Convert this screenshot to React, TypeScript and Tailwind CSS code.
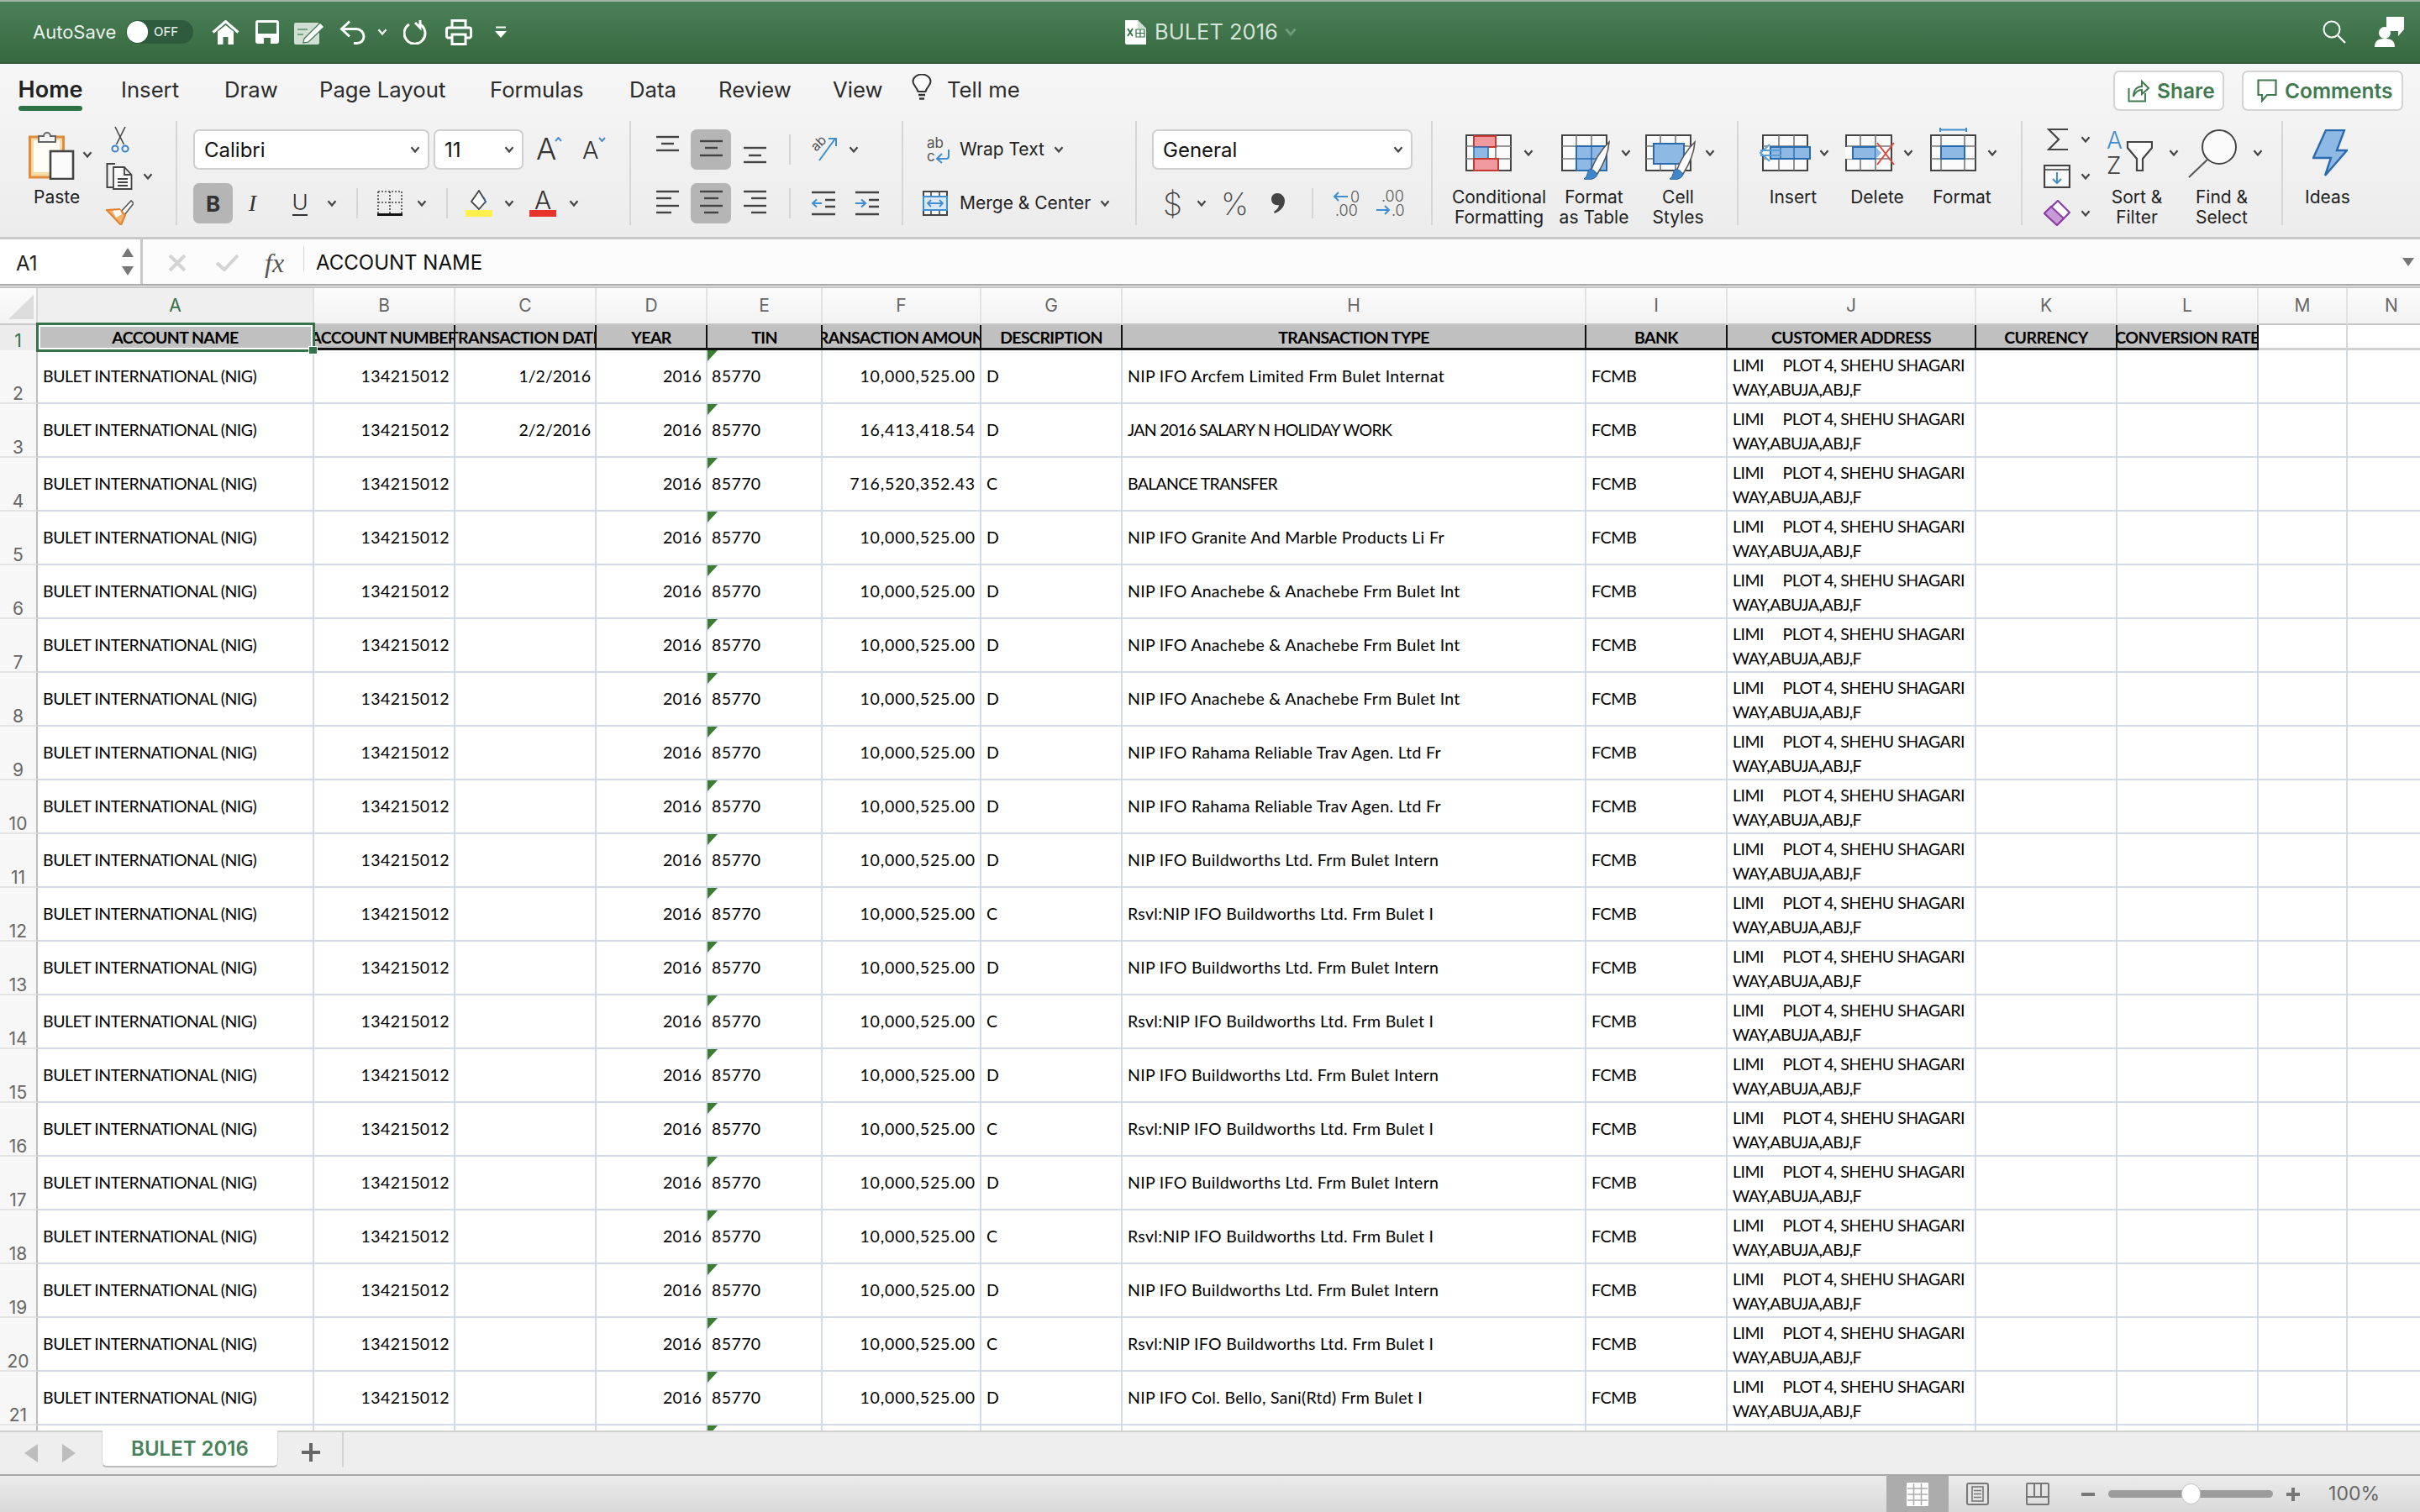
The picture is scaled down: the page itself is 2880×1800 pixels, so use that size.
import React from "react";

const ui = "font-[Inter,sans-serif]";
const cell = "font-[Lato,sans-serif]";

const Chev = ({ className = "", color = "#444" }: { className?: string; color?: string }) => (
  <svg viewBox="0 0 12 8" className={"w-[12px] h-[8px] shrink-0 " + className}>
    <path d="M1.5 1.2 L6 6.5 L10.5 1.2" fill="none" stroke={color} strokeWidth="2.2" />
  </svg>
);

const Sep = () => <div className="w-[2px] h-[124px] bg-[#d6d6d6] shrink-0" />;
const MiniSep = ({ className = "" }: { className?: string }) => <div className={"w-[2px] h-[36px] bg-[#d6d6d6] shrink-0 " + className} />;

function Lines({ ys, widths, w = 27, h = 48, stroke = "#444" }: { ys: number[]; widths: [number, number][]; w?: number; h?: number; stroke?: string }) {
  return (
    <svg viewBox={`0 0 ${w} ${h}`} className="shrink-0" width={w} height={h}>
      {ys.map((y, i) => (
        <path key={i} d={`M${widths[i][0]} ${y} H${widths[i][1]}`} stroke={stroke} strokeWidth="2.4" />
      ))}
    </svg>
  );
}

function Select({ text, className }: { text: string; className: string }) {
  return (
    <div className={"h-[48px] bg-white border-2 border-[#cfcfcf] rounded-[7px] flex items-center justify-between pl-[11px] pr-[9px] shrink-0 " + className}>
      <span className="text-[24px] text-[#111] leading-none pt-[2px]">{text}</span>
      <Chev />
    </div>
  );
}

function Grid({ w = 55, h = 44, v = [18, 36], hz = [14, 29] }: { w?: number; h?: number; v?: number[]; hz?: number[] }) {
  return (
    <>
      <rect x="1" y="1" width={w - 2} height={h - 2} fill="#fafafa" stroke="#444" strokeWidth="2" />
      {v.map((x) => (
        <path key={"v" + x} d={`M${x} 1 V${h - 1}`} stroke="#777" strokeWidth="1.6" />
      ))}
      {hz.map((y) => (
        <path key={"h" + y} d={`M1 ${y} H${w - 1}`} stroke="#777" strokeWidth="1.6" />
      ))}
    </>
  );
}

const Brush = ({ x = 0 }: { x?: number }) => (
  <g transform={`translate(${x} 0)`}>
    <path d="M35 44 C40 30 48 18 57 9 C56 24 50 36 43 47 Z" fill="#fff" stroke="#555" strokeWidth="1.6" />
    <path d="M34 41 C39 42 42 45 43 48 C41 53 34 55 27 53 C32 50 30 45 34 41 Z" fill="#3f86c8" stroke="#2c6aa6" strokeWidth="1" />
  </g>
);

function BigLabel({ children, className = "" }: { children: React.ReactNode; className?: string }) {
  return <div className={"text-[21px] leading-[24px] text-[#222] text-center " + className}>{children}</div>;
}

function TitleBar() {
  return (
    <div className="h-[76px] flex items-center bg-gradient-to-b from-[#4b8159] to-[#37683f] border-t-2 border-t-[#a3b5a8] border-b-2 border-b-[#305a37] relative text-white">
      <span className="ml-[39px] w-[111px] text-[22px] text-[#eaf1ec]">AutoSave</span>
      <div className="w-[80px] h-[28px] rounded-full bg-[#2e5a3d] flex items-center shrink-0">
        <div className="w-[25px] h-[26px] rounded-full bg-white ml-[1px]" />
        <span className="ml-[7px] text-[15px] font-medium text-[#dfe9e1]">OFF</span>
      </div>
      <svg viewBox="0 0 33 29" className="w-[33px] h-[29px] ml-[22px]">
        <path d="M1.5 14.5 L16.5 1.5 L31.5 14.5" fill="none" stroke="#fff" strokeWidth="3" />
        <path d="M7 13.5 L16.5 6 L26 13.5 V29 H19.5 V20 H13.5 V29 H7 Z" fill="#fff" />
      </svg>
      <svg viewBox="0 0 28 28" className="w-[28px] h-[28px] ml-[19px]">
        <path d="M3 0 H25 a3 3 0 0 1 3 3 V25 a3 3 0 0 1 -3 3 H3 a3 3 0 0 1 -3 -3 V3 a3 3 0 0 1 3 -3 Z M3 3 V16 H25 V3 Z M10 21 V28 H18 V21 Z" fill="#fff" fillRule="evenodd" />
      </svg>
      <svg viewBox="0 0 36 29" className="w-[36px] h-[29px] ml-[18px]">
        <rect x="0" y="3" width="30" height="26" rx="2" fill="#cfe0d3" />
        <path d="M12 22 L31 3 L36 8 L17 26 L11 27 Z" fill="#fff" stroke="#3e7049" strokeWidth="1.2" />
        <path d="M4 11 H16 M4 17 H11" stroke="#7aa084" strokeWidth="2" />
      </svg>
      <svg viewBox="0 0 31 29" className="w-[31px] h-[29px] ml-[18px]">
        <path d="M12 1.5 L2.5 10.5 L12 19.5 M3 10.5 H20 A9 9 0 0 1 29 19.5 A8 8 0 0 1 21 27.5 H17" fill="none" stroke="#fff" strokeWidth="3" />
      </svg>
      <Chev className="ml-[14px] w-[10px]" color="#fff" />
      <svg viewBox="0 0 30 30" className="w-[30px] h-[30px] ml-[19px]">
        <path d="M20 1 V10 L14 4 M20 6 A12.5 12.5 0 1 1 7 6" fill="none" stroke="#fff" strokeWidth="3" />
      </svg>
      <svg viewBox="0 0 32 31" className="w-[32px] h-[31px] ml-[20px]">
        <path d="M8 10 V1.5 H24 V10 M8 22 H3 A2 2 0 0 1 1.5 20 V12 A2 2 0 0 1 3 10 H29 A2 2 0 0 1 30.5 12 V20 A2 2 0 0 1 29 22 H24 M8 18 H24 V29.5 H8 Z" fill="none" stroke="#fff" strokeWidth="3" />
      </svg>
      <svg viewBox="0 0 14 14" className="w-[14px] h-[14px] ml-[27px]">
        <path d="M1 1.5 H13" stroke="#fff" strokeWidth="2" />
        <path d="M0 6 H14 L7 14 Z" fill="#fff" />
      </svg>
      <div className="flex items-center ml-[736px]">
        <svg viewBox="0 0 25 29" className="w-[25px] h-[29px]">
          <path d="M0 0 H15 L25 10 V29 H2 A2 2 0 0 1 0 27 Z" fill="#fff" />
          <path d="M15 0 V10 H25" fill="#cfe0d3" />
          <path d="M3 10 L9 19 M9 10 L3 19" stroke="#2f7045" strokeWidth="1.8" />
          <path d="M13 11 H23 V20 H13 Z M13 15.5 H23 M18 11 V20" fill="none" stroke="#2f7045" strokeWidth="1.2" />
        </svg>
        <span className="ml-[10px] text-[25.5px] text-[#d6e3d9] leading-none">BULET 2016</span>
        <Chev className="ml-[7px] w-[16px] h-[10px]" color="#6f9a7b" />
      </div>
      <div className="ml-auto flex items-center mr-[19px]">
        <svg viewBox="0 0 28 28" className="w-[28px] h-[28px]">
          <circle cx="11" cy="11" r="9.5" fill="none" stroke="#fff" strokeWidth="2" />
          <path d="M18 18 L27 27" stroke="#fff" strokeWidth="2.2" />
        </svg>
        <svg viewBox="0 0 35 36" className="w-[35px] h-[36px] ml-[34px]">
          <path d="M14 0 H35 V15 L28 23 V17 H14 Z" fill="#fff" />
          <circle cx="12" cy="19" r="7" fill="#fff" />
          <path d="M0 36 C0 28 5 26 12 26 C19 26 24 28 24 36 Z" fill="#fff" />
        </svg>
      </div>
    </div>
  );
}

function TabsRow() {
  const t = "mt-[15px] leading-[32px] whitespace-nowrap shrink-0 ";
  return (
    <div className="h-[68px] flex text-[25.7px] text-[#2b2b2b]">
      <div className="ml-[22px] w-[76px] h-[56px] flex flex-col items-center">
        <span className="mt-[15px] text-[27px] font-semibold leading-[32px] text-[#222]">Home</span>
        <div className="mt-[3px] w-[76px] h-[6px] rounded-full bg-[#2f7045]" />
      </div>
      <span className={t + "ml-[46px] w-[72px]"}>Insert</span>
      <span className={t + "ml-[51px] w-[62px]"}>Draw</span>
      <span className={t + "ml-[51px] w-[150px]"}>Page Layout</span>
      <span className={t + "ml-[53px] w-[114px]"}>Formulas</span>
      <span className={t + "ml-[52px] w-[56px]"}>Data</span>
      <span className={t + "ml-[50px] w-[86px]"}>Review</span>
      <span className={t + "ml-[50px] w-[58px]"}>View</span>
      <svg viewBox="0 0 24 32" className="w-[24px] h-[32px] ml-[36px] mt-[12px]">
        <path d="M7.5 21 C6 15 1.5 14 1.5 9 A10.5 8.5 0 0 1 22.5 9 C22.5 14 18 15 16.5 21 Z" fill="#fff" stroke="#333" strokeWidth="2" />
        <path d="M8 25 H16 M9 29.5 H15" stroke="#333" strokeWidth="2.6" />
      </svg>
      <span className={t + "ml-[18px] w-[86px]"}>Tell me</span>
      <div className="ml-auto flex mt-[8px] mr-[20px]">
        <div className="w-[132px] h-[48px] bg-white border-2 border-[#d4d4d4] rounded-[7px] flex items-center pl-[15px]">
          <svg viewBox="0 0 26 28" className="w-[26px] h-[28px]">
            <path d="M1.5 11 V26.5 H21 V17" fill="none" stroke="#3f7a50" strokeWidth="2" />
            <path d="M7 21 C7 13 11 9 17 9 V3 L25 11 L17 18 V13 C12 13 9 16 7 21 Z" fill="none" stroke="#3f7a50" strokeWidth="2" />
          </svg>
          <span className="ml-[9px] text-[24.5px] font-semibold text-[#3f7a50]">Share</span>
        </div>
        <div className="ml-[21px] w-[192px] h-[48px] bg-white border-2 border-[#d4d4d4] rounded-[7px] flex items-center pl-[16px]">
          <svg viewBox="0 0 24 28" className="w-[24px] h-[28px]">
            <path d="M1.5 1.5 H22.5 V19 H12 L6 26 V19 H1.5 Z" fill="none" stroke="#3f7a50" strokeWidth="2.2" />
          </svg>
          <span className="ml-[9px] text-[24.5px] font-semibold text-[#3f7a50]">Comments</span>
        </div>
      </div>
    </div>
  );
}

function ClipboardGroup() {
  return (
    <div className="w-[209px] flex shrink-0">
      <div className="w-[76px] ml-[34px] mt-[10px]">
        <div className="flex items-center h-[60px]">
          <svg viewBox="0 0 55 60" className="w-[55px] h-[60px] shrink-0">
            <rect x="1.5" y="9" width="40" height="48" fill="#f7dca6" stroke="#e08b3f" strokeWidth="3" />
            <rect x="6" y="13" width="31" height="38" fill="#fffdf5" />
            <path d="M12 15 V8 H18 A4 4 0 0 1 26 8 H32 V15 Z" fill="#f4f4f4" stroke="#666" strokeWidth="2" />
            <rect x="26" y="26" width="27" height="33" fill="#fbfbfb" stroke="#444" strokeWidth="2.6" />
          </svg>
          <Chev className="ml-[9px]" />
        </div>
        <div className="text-[21px] leading-[24px] text-[#222] mt-[9px] ml-[6px]">Paste</div>
      </div>
      <div className="ml-[16px] mt-[6px] w-[56px] flex flex-col">
        <svg viewBox="0 0 22 32" className="w-[22px] h-[32px] ml-[6px]">
          <path d="M5 1 L15.5 22 M17 1 L6.5 22" stroke="#444" strokeWidth="1.6" />
          <circle cx="5" cy="27" r="3.6" fill="none" stroke="#3c82c4" strokeWidth="2" />
          <circle cx="17" cy="27" r="3.6" fill="none" stroke="#3c82c4" strokeWidth="2" />
        </svg>
        <div className="flex items-center mt-[12px]">
          <svg viewBox="0 0 32 32" className="w-[32px] h-[32px]">
            <path d="M11 1 H1.5 V29 H8" fill="none" stroke="#444" strokeWidth="2" />
            <path d="M9 5 H22 L30.5 14 V31 H9 Z M22 5 V14 H30.5 M14 19 H26 M14 23 H26 M14 27 H26" fill="#fafafa" stroke="#444" strokeWidth="1.8" />
          </svg>
          <Chev className="ml-[12px]" />
        </div>
        <svg viewBox="0 0 33 30" className="w-[33px] h-[30px] mt-[12px]">
          <path d="M17 15 L30 1 L33 4 L22 18 Z" fill="#fff" stroke="#555" strokeWidth="1.6" />
          <path d="M1 12 L16 11 L23 18 L18 30 Z" fill="#f2b36c" stroke="#e0812d" strokeWidth="2" />
          <path d="M8 13 L17 12 L19 17 L12 21 Z" fill="#fff" />
        </svg>
      </div>
    </div>
  );
}

function FontGroup() {
  return (
    <div className="w-[538px] shrink-0">
      <div className="flex mt-[10px] ml-[19px] items-start">
        <Select text="Calibri" className="w-[281px]" />
        <Select text="11" className="w-[107px] ml-[5px]" />
        <div className="ml-[15px] h-[48px] w-[31px] flex items-start relative">
          <span className="text-[36px] leading-[44px] font-light text-[#333] mt-[1px]">A</span>
          <svg viewBox="0 0 9 6" className="w-[9px] h-[6px] absolute right-0 top-[9px]">
            <path d="M1 5 L4.5 1 L8 5" fill="none" stroke="#4a90d0" strokeWidth="2" />
          </svg>
        </div>
        <div className="ml-[24px] h-[48px] w-[28px] flex items-start relative">
          <span className="text-[29px] leading-[44px] font-light text-[#333] mt-[3px]">A</span>
          <svg viewBox="0 0 9 6" className="w-[9px] h-[6px] absolute right-0 top-[9px]">
            <path d="M1 1 L4.5 5 L8 1" fill="none" stroke="#4a90d0" strokeWidth="2" />
          </svg>
        </div>
      </div>
      <div className="flex mt-[16px] ml-[19px] items-center h-[48px]">
        <div className="w-[47px] h-[48px] rounded-[7px] bg-[#b5b5b5] flex items-center justify-center text-[26px] font-bold text-[#333] shrink-0">B</div>
        <span className="w-[47px] text-center text-[28px] font-[Liberation_Serif,serif] italic text-[#333]">I</span>
        <div className="ml-[21px] w-[24px] flex flex-col items-center text-[#333] mr-[13px]">
          <span className="text-[26px] leading-[28px] font-light">U</span>
          <div className="w-[18px] h-[2px] bg-[#333]" />
        </div>
        <Chev className="ml-[7px]" />
        <MiniSep className="ml-[23px]" />
        <svg viewBox="0 0 30 30" className="w-[30px] h-[30px] ml-[23px]">
          <path d="M1 1 H29 V27 M1 1 V27 M15 1 V27 M1 14 H29" fill="none" stroke="#444" strokeWidth="1.6" strokeDasharray="2 2" />
          <path d="M0 28.5 H30" stroke="#111" strokeWidth="3" />
        </svg>
        <Chev className="ml-[17px]" />
        <MiniSep className="ml-[23px]" />
        <div className="ml-[21px] w-[32px] flex flex-col items-center">
          <svg viewBox="0 0 30 24" className="w-[30px] h-[24px]">
            <path d="M15 1 L6 14 L15 23 L23 14 Z" fill="#fff" stroke="#444" strokeWidth="1.8" />
            <path d="M19 7 C23 9 24 14 23 17 L21 10 Z" fill="#2f6fb5" />
          </svg>
          <div className="w-[32px] h-[8px] bg-[#fff04e] mt-[0px]" />
        </div>
        <Chev className="ml-[14px]" />
        <div className="ml-[19px] w-[30px] flex flex-col items-center">
          <span className="text-[30px] leading-[24px] font-light text-[#333]">A</span>
          <div className="w-[32px] h-[8px] bg-[#e8332a]" />
        </div>
        <Chev className="ml-[16px]" />
      </div>
    </div>
  );
}

function AlignGroup() {
  const b = "w-[48px] h-[48px] flex items-center justify-center shrink-0";
  const ind = (right: boolean) => (
    <svg viewBox="0 0 28 30" className={"w-[28px] h-[30px] shrink-0"}>
      <path d="M0 2 H28 M16 11 H28 M16 19 H28 M0 28 H28" stroke="#444" strokeWidth="2.4" fill="none" />
      {right ? (
        <path d="M0 15 H11 M7 10.5 L12 15 L7 19.5" stroke="#3f8ed0" strokeWidth="2.2" fill="none" />
      ) : (
        <path d="M12 15 H1 M6 10.5 L1 15 L6 19.5" stroke="#3f8ed0" strokeWidth="2.2" fill="none" />
      )}
    </svg>
  );
  return (
    <div className="w-[322px] shrink-0">
      <div className="flex mt-[10px] ml-[30px] items-start h-[48px]">
        <Lines ys={[9, 17, 25]} widths={[[0, 27], [6, 21], [0, 27]]} />
        <div className={b + " ml-[14px] bg-[#b5b5b5] rounded-[7px]"}>
          <Lines ys={[14, 22, 31]} widths={[[0, 27], [6, 21], [0, 27]]} />
        </div>
        <div className="ml-[15px]">
          <Lines ys={[22, 31, 39]} widths={[[0, 27], [6, 21], [0, 27]]} />
        </div>
        <div className="w-[2px] h-[36px] bg-[#d6d6d6] ml-[27px] mt-[6px] shrink-0" />
        <svg viewBox="0 0 32 30" className="w-[32px] h-[30px] ml-[24px] mt-[8px] shrink-0 overflow-visible">
          <text x="2" y="15" fontSize="16" fill="#555" transform="rotate(-45 9 12)" fontFamily="Inter, sans-serif">ab</text>
          <path d="M10 29 L29 3 M21 3 H30 V12" fill="none" stroke="#3f8ed0" strokeWidth="2" />
        </svg>
        <Chev className="ml-[13px] mt-[20px]" />
      </div>
      <div className="flex mt-[16px] ml-[30px] items-center h-[48px]">
        <Lines ys={[10, 18, 27, 35]} widths={[[0, 27], [0, 18], [0, 27], [0, 18]]} />
        <div className={b + " ml-[14px] bg-[#b5b5b5] rounded-[7px]"}>
          <Lines ys={[10, 18, 27, 35]} widths={[[0, 27], [5, 22], [0, 27], [5, 22]]} />
        </div>
        <div className="ml-[15px]">
          <Lines ys={[10, 18, 27, 35]} widths={[[0, 27], [9, 27], [0, 27], [9, 27]]} />
        </div>
        <MiniSep className="ml-[27px]" />
        <div className="ml-[25px]">{ind(false)}</div>
        <div className="ml-[24px]">{ind(true)}</div>
      </div>
    </div>
  );
}

function WrapGroup() {
  return (
    <div className="w-[276px] shrink-0 text-[21px] text-[#222]">
      <div className="flex mt-[10px] ml-[28px] items-center h-[48px]">
        <svg viewBox="0 0 28 32" className="w-[28px] h-[32px] shrink-0 overflow-visible">
          <text x="0" y="14" fontSize="17" fill="#555" fontFamily="Inter, sans-serif">ab</text>
          <text x="0" y="30" fontSize="17" fill="#555" fontFamily="Inter, sans-serif">c</text>
          <path d="M26 16 V24 A3 3 0 0 1 23 27 H13 M18 21 L12 27 L18 32" fill="none" stroke="#3f8ed0" strokeWidth="2" />
        </svg>
        <span className="ml-[11px]">Wrap Text</span>
        <Chev className="ml-[11px]" />
      </div>
      <div className="flex mt-[16px] ml-[23px] items-center h-[48px]">
        <svg viewBox="0 0 30 30" className="w-[30px] h-[30px] shrink-0">
          <rect x="1" y="1" width="28" height="28" fill="#fafafa" stroke="#444" strokeWidth="2" />
          <path d="M10 1 V7 M20 1 V7 M10 23 V29 M20 23 V29" stroke="#444" strokeWidth="1.6" />
          <rect x="1" y="7" width="28" height="16" fill="#dbe9f6" stroke="#3f8ed0" strokeWidth="2" />
          <path d="M6 15 H24 M10 11 L6 15 L10 19 M20 11 L24 15 L20 19" fill="none" stroke="#3f8ed0" strokeWidth="1.8" />
        </svg>
        <span className="ml-[14px]">Merge &amp; Center</span>
        <Chev className="ml-[11px]" />
      </div>
    </div>
  );
}

function Dec({ more }: { more: boolean }) {
  return (
    <svg viewBox="0 0 32 32" className="w-[32px] h-[32px] shrink-0 overflow-visible">
      {more ? (
        <>
          <text x="6" y="14" fontSize="18" fontWeight="300" fill="#555" fontFamily="Inter, sans-serif">.00</text>
          <text x="18" y="31" fontSize="18" fontWeight="300" fill="#555" fontFamily="Inter, sans-serif">.0</text>
          <path d="M0 24 H15 M10 19 L15 24 L10 29" fill="none" stroke="#3f8ed0" strokeWidth="2" />
        </>
      ) : (
        <>
          <text x="21" y="15" fontSize="18" fontWeight="300" fill="#555" fontFamily="Inter, sans-serif">0</text>
          <text x="3" y="31" fontSize="18" fontWeight="300" fill="#555" fontFamily="Inter, sans-serif">.00</text>
          <path d="M18 8 H2 M7 3 L2 8 L7 13" fill="none" stroke="#3f8ed0" strokeWidth="2" />
        </>
      )}
    </svg>
  );
}

function NumberGroup() {
  return (
    <div className="w-[350px] shrink-0">
      <div className="mt-[10px] ml-[18px]">
        <Select text="General" className="w-[310px]" />
      </div>
      <div className="flex mt-[16px] ml-[31px] items-center h-[48px] text-[#444]">
        <span className="w-[20px] text-[37px] font-extralight leading-none">$</span>
        <Chev className="ml-[20px]" />
        <span className="ml-[17px] w-[33px] text-[37px] font-extralight leading-none">%</span>
        <svg viewBox="0 0 16 24" className="w-[16px] h-[24px] ml-[27px] shrink-0">
          <path d="M7 0 C12 0 16 4 16 9 C16 16 11 21 4 24 L3 22 C7 19 9 17 9 14 C4 15 0 12 0 7 C0 3 3 0 7 0 Z" fill="#444" />
        </svg>
        <MiniSep className="ml-[32px]" />
        <div className="ml-[23px]"><Dec more={false} /></div>
        <div className="ml-[20px]"><Dec more /></div>
      </div>
    </div>
  );
}

function StylesGroup() {
  return (
    <div className="w-[362px] shrink-0 flex pl-[20px]">
      <div className="w-[118px]">
        <div className="h-[79px] flex items-start pl-[19px]">
          <svg viewBox="0 0 55 44" className="w-[55px] h-[44px] mt-[16px] shrink-0">
            <Grid />
            <rect x="10" y="2" width="26" height="13" fill="#f09aa0" stroke="#c8382e" strokeWidth="2" />
            <rect x="10" y="15" width="17" height="14" fill="#8db9e4" stroke="#2a6bb0" strokeWidth="1.5" />
            <rect x="10" y="29" width="29" height="14" fill="#f09aa0" stroke="#c8382e" strokeWidth="2" />
          </svg>
          <Chev className="ml-[14px] mt-[34px]" />
        </div>
        <BigLabel>Conditional<br />Formatting</BigLabel>
      </div>
      <div className="w-[102px] ml-[3px]">
        <div className="h-[79px] flex items-start pl-[12px]">
          <svg viewBox="0 0 58 54" className="w-[58px] h-[54px] mt-[16px] shrink-0">
            <Grid />
            <rect x="18" y="14" width="36" height="29" fill="#8db9e4" stroke="#2a6bb0" strokeWidth="2" />
            <path d="M18 29 H54 M36 14 V43" stroke="#2a6bb0" strokeWidth="1.4" />
            <Brush />
          </svg>
          <Chev className="ml-[13px] mt-[34px]" />
        </div>
        <BigLabel>Format<br />as Table</BigLabel>
      </div>
      <div className="w-[98px]">
        <div className="h-[79px] flex items-start pl-[10px]">
          <svg viewBox="0 0 60 54" className="w-[60px] h-[54px] mt-[16px] shrink-0">
            <Grid />
            <rect x="10" y="11" width="36" height="24" fill="#8db9e4" stroke="#2a6bb0" strokeWidth="2" />
            <g transform="translate(2 0)"><Brush /></g>
          </svg>
          <Chev className="ml-[11px] mt-[34px]" />
        </div>
        <BigLabel>Cell<br />Styles</BigLabel>
      </div>
    </div>
  );
}

function CellsGroup() {
  return (
    <div className="w-[336px] shrink-0 flex pl-[15px]">
      <div className="w-[100px]">
        <div className="h-[79px] flex items-start pl-[9px]">
          <svg viewBox="0 0 63 44" className="w-[63px] h-[44px] mt-[16px] shrink-0">
            <g transform="translate(4 0)"><Grid v={[20, 38]} /></g>
            <rect x="14" y="15" width="47" height="14" fill="#8db9e4" stroke="#2a6bb0" strokeWidth="2" />
            <path d="M26 15 V29 M42 15 V29" stroke="#2a6bb0" strokeWidth="1.4" />
            <path d="M13 12 L2 22 L13 32 M2 19 H27 M2 25 H27" fill="#fafafa" stroke="#5a9fd8" strokeWidth="2" />
          </svg>
          <Chev className="ml-[9px] mt-[34px]" />
        </div>
        <BigLabel>Insert</BigLabel>
      </div>
      <div className="w-[100px]">
        <div className="h-[79px] flex items-start pl-[12px]">
          <svg viewBox="0 0 60 44" className="w-[60px] h-[44px] mt-[16px] shrink-0">
            <rect x="1" y="1" width="54" height="42" fill="#fafafa" stroke="#444" strokeWidth="2" />
            <path d="M18 1 V43 M36 1 V43 M1 14 H55 M1 29 H55" stroke="#777" strokeWidth="1.6" />
            <rect x="0" y="15" width="36" height="14" fill="#fafafa" />
            <rect x="9" y="15" width="27" height="14" fill="#8db9e4" stroke="#2a6bb0" strokeWidth="2" />
            <path d="M36 15 L43 22 L36 29 Z" fill="#8db9e4" />
            <path d="M38 10 L58 36 M58 10 L38 36" stroke="#e0483e" strokeWidth="2" />
          </svg>
          <Chev className="ml-[9px] mt-[34px]" />
        </div>
        <BigLabel>Delete</BigLabel>
      </div>
      <div className="w-[100px] ml-[1px]">
        <div className="h-[79px] flex items-start pl-[12px]">
          <svg viewBox="0 0 55 54" className="w-[55px] h-[54px] mt-[6px] shrink-0">
            <path d="M12 2 V7 M12 4.5 H43 M43 2 V7" fill="none" stroke="#3f8ed0" strokeWidth="2" />
            <g transform="translate(0 10)">
              <Grid v={[13, 41]} />
              <rect x="13" y="14" width="28" height="15" fill="#8db9e4" stroke="#2a6bb0" strokeWidth="2" />
            </g>
          </svg>
          <Chev className="ml-[13px] mt-[34px]" />
        </div>
        <BigLabel>Format</BigLabel>
      </div>
    </div>
  );
}

function EditingGroup() {
  return (
    <div className="w-[308px] shrink-0 flex pl-[25px]">
      <div className="w-[61px] shrink-0">
        <div className="flex items-center h-[28px] mt-[8px]">
          <svg viewBox="0 0 28 28" className="w-[28px] h-[28px] ml-[4px] shrink-0">
            <path d="M25 2 H2 L14 14 L2 26 H25" fill="none" stroke="#444" strokeWidth="2.2" />
          </svg>
          <Chev className="ml-[12px]" />
        </div>
        <div className="flex items-center h-[28px] mt-[16px]">
          <svg viewBox="0 0 32 28" className="w-[32px] h-[28px] shrink-0">
            <rect x="1" y="1" width="30" height="26" fill="#fafafa" stroke="#444" strokeWidth="2.2" />
            <path d="M1 6 H31" stroke="#444" strokeWidth="1.6" />
            <path d="M16 9 V22 M11 17 L16 22 L21 17" fill="none" stroke="#3f8ed0" strokeWidth="2" />
          </svg>
          <Chev className="ml-[12px]" />
        </div>
        <div className="flex items-center h-[31px] mt-[14px]">
          <svg viewBox="0 0 32 31" className="w-[32px] h-[31px] shrink-0">
            <path d="M17 1 L31 15 L16 30 L1 16 Z" fill="#fff" stroke="#8a3ea8" strokeWidth="2.2" />
            <path d="M9 8 L24 22 L16 30 L1 16 Z" fill="#c99ad8" stroke="#8a3ea8" strokeWidth="2" />
          </svg>
          <Chev className="ml-[12px]" />
        </div>
      </div>
      <div className="w-[100px] shrink-0">
        <div className="h-[79px] flex items-start pl-[14px]">
          <svg viewBox="0 0 55 53" className="w-[55px] h-[53px] mt-[11px] shrink-0">
            <text x="0" y="22" fontSize="28" fill="#3f8ed0" fontWeight="300" fontFamily="Inter, sans-serif">A</text>
            <text x="0" y="52" fontSize="28" fill="#444" fontWeight="300" fontFamily="Inter, sans-serif">Z</text>
            <path d="M25 14 H54 V21 L43 34 V48 H36 V34 L25 21 Z" fill="#fafafa" stroke="#444" strokeWidth="2.2" />
          </svg>
          <Chev className="ml-[19px] mt-[34px]" />
        </div>
        <BigLabel>Sort &amp;<br />Filter</BigLabel>
      </div>
      <div className="w-[100px] ml-[1px] shrink-0">
        <div className="h-[79px] flex items-start pl-[10px]">
          <svg viewBox="0 0 58 58" className="w-[58px] h-[58px] mt-[10px] shrink-0">
            <ellipse cx="37" cy="21" rx="20" ry="20" fill="#fbfbfb" stroke="#444" strokeWidth="2" />
            <path d="M23 36 L1 57" stroke="#555" strokeWidth="2" />
          </svg>
          <Chev className="ml-[19px] mt-[34px]" />
        </div>
        <BigLabel>Find &amp;<br />Select</BigLabel>
      </div>
    </div>
  );
}

function IdeasGroup() {
  return (
    <div className="flex-1 pl-[13px]">
      <div className="w-[80px]">
        <div className="h-[79px] pl-[22px] pt-[10px]">
          <svg viewBox="0 0 42 56" className="w-[42px] h-[56px]">
            <path d="M16 1 H38 L29 25 H41 L15 55 L22 34 H1 Z" fill="#8db9e4" stroke="#2a6bb0" strokeWidth="2.4" />
          </svg>
        </div>
        <BigLabel>Ideas</BigLabel>
      </div>
    </div>
  );
}

function Ribbon() {
  return (
    <div className="h-[209px] bg-gradient-to-b from-[#f6f6f6] to-[#ececec] border-b-[3px] border-b-[#c8c8c8]">
      <TabsRow />
      <div className="flex h-[124px]">
        <ClipboardGroup />
        <Sep />
        <FontGroup />
        <Sep />
        <AlignGroup />
        <Sep />
        <WrapGroup />
        <Sep />
        <NumberGroup />
        <Sep />
        <StylesGroup />
        <Sep />
        <CellsGroup />
        <Sep />
        <EditingGroup />
        <Sep />
        <IdeasGroup />
      </div>
    </div>
  );
}

function FormulaBar() {
  return (
    <div className="h-[58px] flex flex-col">
      <div className="h-[53px] bg-[#fcfcfc] flex">
        <div className="w-[170px] shrink-0 bg-white border-r-[3px] border-r-[#c9c9c9] flex items-center pl-[19px]">
          <span className="text-[24px] text-[#222] pt-[4px]">A1</span>
          <div className="ml-auto mr-[8px] flex flex-col gap-[11px]">
            <svg viewBox="0 0 14 11" className="w-[14px] h-[11px]"><path d="M7 0 L14 11 H0 Z" fill="#777" /></svg>
            <svg viewBox="0 0 14 11" className="w-[14px] h-[11px]"><path d="M7 11 L14 0 H0 Z" fill="#777" /></svg>
          </div>
        </div>
        <svg viewBox="0 0 22 20" className="w-[22px] h-[20px] ml-[30px] mt-[18px]"><path d="M2 1 L20 19 M20 1 L2 19" stroke="#d4d4d4" strokeWidth="4" /></svg>
        <svg viewBox="0 0 29 20" className="w-[29px] h-[20px] ml-[34px] mt-[18px]"><path d="M2 10 L11 18 L27 1" fill="none" stroke="#d4d4d4" strokeWidth="4" /></svg>
        <span className="ml-[30px] w-[32px] text-[32px] italic font-[Liberation_Serif,serif] text-[#555] leading-[56px]">fx</span>
        <div className="ml-[14px] mt-[8px] w-[1px] h-[30px] bg-[#d8d8d8]" />
        <span className="ml-[14px] text-[24px] text-[#111] leading-[56px]">ACCOUNT NAME</span>
        <svg viewBox="0 0 14 10" className="w-[14px] h-[10px] ml-auto mr-[7px] mt-[22px]"><path d="M7 10 L14 0 H0 Z" fill="#777" /></svg>
      </div>
      <div className="h-[5px] bg-[#ededed] border-y-2 border-t-[#a9a9a9] border-b-[#c4c4c4]" />
    </div>
  );
}

const gridCols = "grid grid-cols-[45px_329px_168px_168px_132px_137px_189px_168px_552px_168px_296px_168px_168px_106px_106px]";
const heads = ["ACCOUNT NAME", "ACCOUNT NUMBER", "TRANSACTION DATE", "YEAR", "TIN", "TRANSACTION AMOUNT", "DESCRIPTION", "TRANSACTION TYPE", "BANK", "CUSTOMER ADDRESS", "CURRENCY", "CONVERSION RATE"];
const letters = ["A", "B", "C", "D", "E", "F", "G", "H", "I", "J", "K", "L", "M", "N"];

const BI = "NIP IFO Buildworths Ltd. Frm Bulet Intern";
const RS = "Rsvl:NIP IFO Buildworths Ltd. Frm Bulet I";
const AN = "NIP IFO Anachebe & Anachebe Frm Bulet Int";
const RH = "NIP IFO Rahama Reliable Trav Agen. Ltd Fr";
const M = "10,000,525.00";
const rows: [number, string, string, string, string][] = [
  [2, "1/2/2016", M, "D", "NIP IFO Arcfem Limited Frm Bulet Internat"],
  [3, "2/2/2016", "16,413,418.54", "D", "JAN 2016 SALARY N HOLIDAY WORK"],
  [4, "", "716,520,352.43", "C", "BALANCE TRANSFER"],
  [5, "", M, "D", "NIP IFO Granite And Marble Products Li Fr"],
  [6, "", M, "D", AN],
  [7, "", M, "D", AN],
  [8, "", M, "D", AN],
  [9, "", M, "D", RH],
  [10, "", M, "D", RH],
  [11, "", M, "D", BI],
  [12, "", M, "C", RS],
  [13, "", M, "D", BI],
  [14, "", M, "C", RS],
  [15, "", M, "D", BI],
  [16, "", M, "C", RS],
  [17, "", M, "D", BI],
  [18, "", M, "C", RS],
  [19, "", M, "D", BI],
  [20, "", M, "C", RS],
  [21, "", M, "D", "NIP IFO Col. Bello, Sani(Rtd) Frm Bulet I"],
];

const gl = "border-r-2 border-b-2 border-[#d3d9e7] flex items-center overflow-hidden whitespace-nowrap";
const Flag = () => (
  <svg viewBox="0 0 12 13" className="absolute left-0 top-0 w-[12px] h-[13px]"><path d="M0 0 H12 L0 13 Z" fill="#3a7d2f" /></svg>
);

function Sheet() {
  return (
    <div className="relative h-[1360px] overflow-hidden bg-white">
      <div className={gridCols + " h-[44px]"}>
        <div className="bg-gradient-to-b from-[#fbfbfb] to-[#f3f3f3] border-b-2 border-[#c6c6c6] border-r-2 border-r-[#d8d8d8] flex items-end pl-[10px] pb-[5px]">
          <svg viewBox="0 0 30 29" className="w-[30px] h-[29px]"><path d="M30 0 V29 H0 Z" fill="#dcdcdc" /></svg>
        </div>
        {letters.map((l, i) => (
          <div key={l} className={(i === 0 ? "bg-[#efefef] text-[#2f7045]" : "bg-gradient-to-b from-[#fbfbfb] to-[#f3f3f3] text-[#666]") + " border-b-2 border-[#c6c6c6] border-r-2 border-r-[#e2e2e2] flex items-center justify-center text-[21px]"}>
            {l}
          </div>
        ))}
      </div>
      <div className={gridCols + " h-[30px] " + cell}>
        <div className="bg-[#ececec] text-[#2f7045] text-[21px] flex items-end justify-center leading-[22px] font-[Inter,sans-serif] border-r-2 border-[#bdbdbd]">1</div>
        {heads.map((h) => (
          <div key={h} className="bg-[#c0c0c0] border-r-2 border-r-[#111] border-b-[3px] border-b-[#111] flex justify-center items-center overflow-hidden whitespace-nowrap text-[19.5px] font-bold text-[#000] tracking-[-0.6px] pt-[2px]">
            <span className="shrink-0">{h}</span>
          </div>
        ))}
        <div className="border-r-2 border-b-[3px] border-r-[#d8d8d8] border-b-[#d0d0d0]" />
        <div className="border-r-2 border-b-[3px] border-r-[#d8d8d8] border-b-[#d0d0d0]" />
      </div>
      {rows.map(([n, date, amt, dc, type]) => (
        <div key={n} className={gridCols + " h-[64px] text-[19.5px] text-[#000] " + cell}>
          <div className="bg-[#f7f7f7] border-r-2 border-r-[#bdbdbd] border-b-2 border-b-[#e4e4e4] text-[21px] text-[#666] font-[Inter,sans-serif] flex items-end justify-center leading-[20px]">{n}</div>
          <div className={gl + " pl-[6px] tracking-[-0.48px]"}>BULET INTERNATIONAL (NIG)</div>
          <div className={gl + " justify-end pr-[5px] tracking-[0.4px]"}>134215012</div>
          <div className={gl + " justify-end pr-[5px]"}>{date}</div>
          <div className={gl + " justify-end pr-[5px] tracking-[0.2px]"}>2016</div>
          <div className={gl + " pl-[5px] relative tracking-[0.4px]"}>
            <Flag />
            85770
          </div>
          <div className={gl + " justify-end pr-[5px] tracking-[0.85px]"}>{amt}</div>
          <div className={gl + " pl-[6px]"}>{dc}</div>
          <div className={gl + " pl-[6px] " + (type === type.toUpperCase() ? "tracking-[-0.7px]" : "tracking-[0.3px]")}>{type}</div>
          <div className={gl + " pl-[6px] tracking-[-0.3px]"}>FCMB</div>
          <div className={gl + " pl-[6px] pt-[2px] leading-[29px] tracking-[-0.5px]"}>
            <div className="whitespace-pre">{"LIMI     PLOT 4, SHEHU SHAGARI"}<br />WAY,ABUJA,ABJ,F</div>
          </div>
          <div className={gl} />
          <div className={gl} />
          <div className={gl} />
          <div className={gl} />
        </div>
      ))}
      <div className={gridCols + " h-[6px]"}>
        <div className="bg-[#f7f7f7] border-r-2 border-r-[#bdbdbd]" />
        <div className="border-r-2 border-[#d3d9e7]" />
        <div className="border-r-2 border-[#d3d9e7]" />
        <div className="border-r-2 border-[#d3d9e7]" />
        <div className="border-r-2 border-[#d3d9e7]" />
        <div className="border-r-2 border-[#d3d9e7] relative"><Flag /></div>
        <div className="border-r-2 border-[#d3d9e7]" />
        <div className="border-r-2 border-[#d3d9e7]" />
        <div className="border-r-2 border-[#d3d9e7]" />
        <div className="border-r-2 border-[#d3d9e7]" />
        <div className="border-r-2 border-[#d3d9e7]" />
        <div className="border-r-2 border-[#d3d9e7]" />
        <div className="border-r-2 border-[#d3d9e7]" />
        <div className="border-r-2 border-[#d3d9e7]" />
        <div className="border-r-2 border-[#d3d9e7]" />
      </div>
      <div className="absolute left-[43px] top-[41px] w-[332px] h-[35px] border-[3px] border-[#35724a] outline-2 outline-white -outline-offset-[5px]" />
      <div className="absolute left-[367px] top-[69px] w-[11px] h-[10px] bg-[#35724a] border border-white" />
    </div>
  );
}

function TabBar() {
  return (
    <div className="h-[52px] bg-[#eeeeee] border-t-2 border-t-[#cfcfcf] flex">
      <svg viewBox="0 0 16 22" className="w-[16px] h-[22px] ml-[29px] mt-[14px]"><path d="M16 0 V22 L0 11 Z" fill="#bdbdbd" /></svg>
      <svg viewBox="0 0 16 22" className="w-[16px] h-[22px] ml-[29px] mt-[14px]"><path d="M0 0 V22 L16 11 Z" fill="#bdbdbd" /></svg>
      <div className="ml-[31px] w-[210px] h-[44px] -mt-[2px] pt-[2px] bg-white rounded-b-[6px] border-x border-x-[#d8d8d8] border-b-2 border-b-[#bcbcbc] flex items-center justify-center text-[24px] font-semibold text-[#48825a]">
        BULET 2016
      </div>
      <svg viewBox="0 0 22 22" className="w-[22px] h-[22px] ml-[28px] mt-[13px]"><path d="M11 0 V22 M0 11 H22" stroke="#666" strokeWidth="4" /></svg>
      <div className="w-[2px] h-[42px] bg-[#d4d4d4] ml-[26px]" />
    </div>
  );
}

function StatusBar() {
  return (
    <div className="h-[45px] bg-gradient-to-b from-[#ebebeb] to-[#d9d9d9] border-t-2 border-t-[#a8a8a8] flex items-center justify-end">
      <div className="w-[74px] h-[43px] bg-[#acacac] flex items-center justify-center">
        <svg viewBox="0 0 26 28" className="w-[26px] h-[28px]">
          <rect width="26" height="28" fill="#fff" rx="1" />
          <path d="M1 7 H25 M1 14 H25 M1 21 H25 M8.5 1 V27 M17.5 1 V27" stroke="#acacac" strokeWidth="1.6" />
        </svg>
      </div>
      <svg viewBox="0 0 27 27" className="w-[27px] h-[27px] ml-[21px]">
        <rect x="1" y="1" width="25" height="25" rx="2" fill="#e4e4e4" stroke="#777" strokeWidth="2" />
        <rect x="7" y="5" width="13" height="17" fill="none" stroke="#777" strokeWidth="1.6" />
        <path d="M9 9.5 H18 M9 13.5 H18 M9 17.5 H18" stroke="#777" strokeWidth="1.6" />
      </svg>
      <svg viewBox="0 0 28 27" className="w-[28px] h-[27px] ml-[44px]">
        <rect x="1" y="1" width="26" height="25" rx="1" fill="none" stroke="#777" strokeWidth="2" />
        <path d="M1 17 H27 M10 1 V17 M18 1 V17" fill="none" stroke="#777" strokeWidth="2" />
      </svg>
      <div className="w-[16px] h-[4px] bg-[#777] ml-[38px]" />
      <div className="ml-[16px] w-[196px] h-[9px] rounded-full bg-[#9c9c9c] relative shrink-0">
        <div className="absolute left-[87px] -top-[8px] w-[23px] h-[25px] rounded-full bg-white border border-[#c0c0c0]" />
      </div>
      <svg viewBox="0 0 16 16" className="w-[16px] h-[16px] ml-[16px]"><path d="M8 0 V16 M0 8 H16" stroke="#777" strokeWidth="4" /></svg>
      <span className="ml-[34px] mr-[48px] text-[23px] text-[#666] leading-none">100%</span>
    </div>
  );
}

export default function App() {
  return (
    <div className={"w-[2880px] h-[1800px] overflow-hidden flex flex-col bg-white " + ui}>
      <TitleBar />
      <Ribbon />
      <FormulaBar />
      <Sheet />
      <TabBar />
      <StatusBar />
    </div>
  );
}
